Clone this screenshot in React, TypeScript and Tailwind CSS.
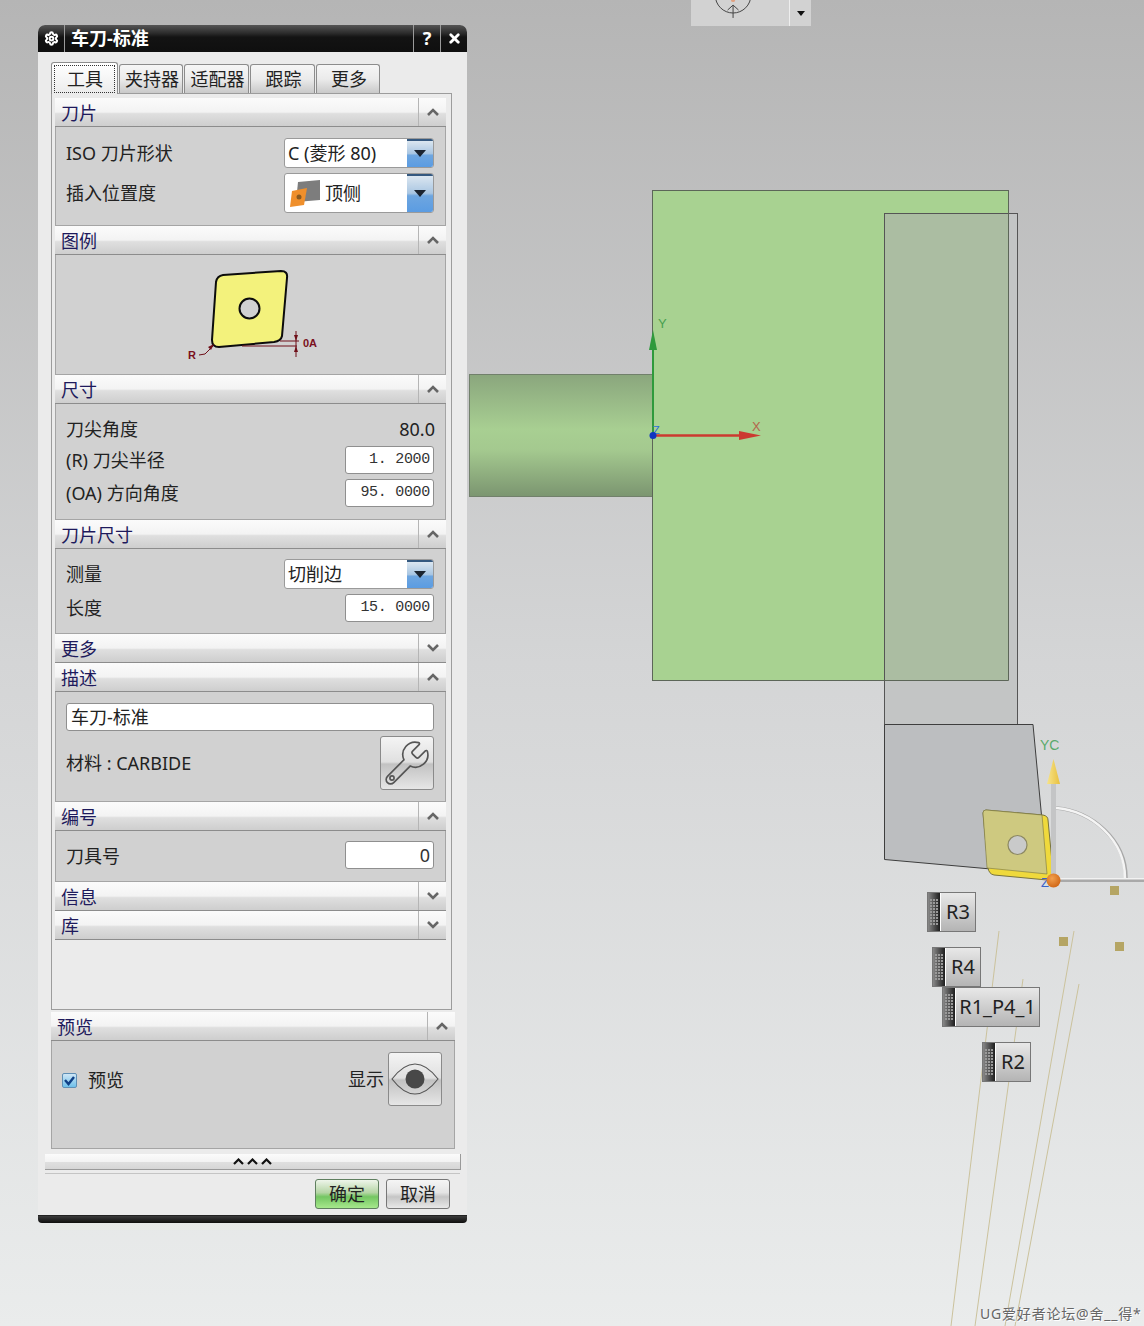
import React from "react";
import { Settings, X } from "lucide-react";

const gloss =
  "bg-[linear-gradient(#f4f4f4_0%,#e0e0e0_48%,#c2c2c2_52%,#e6e6e6_100%)]";

const Chevron = ({ open }: { open: boolean }) => (
  <svg width="12" height="8" viewBox="0 0 12 8">
    <polyline
      points={open ? "1,7 6,2 11,7" : "1,1 6,6 11,1"}
      fill="none"
      stroke="#666"
      strokeWidth="2.6"
    />
  </svg>
);

const SectionHeader = ({ title, open }: { title: string; open: boolean }) => (
  <div className="flex h-[29px] items-stretch border-b border-[#8c8c8c] bg-[linear-gradient(#fbfbfb_0%,#f3f3f3_50%,#dfdfdf_56%,#cecece_100%)]">
    <div className="flex-1 pl-[6px] text-[18px] leading-[30px] text-[#1e1a5c]">
      {title}
    </div>
    <div className="flex w-[28px] items-center justify-center border-l border-[#b5b5b5]">
      <Chevron open={open} />
    </div>
  </div>
);

const SectionBody = ({
  className,
  children,
}: {
  className: string;
  children?: React.ReactNode;
}) => (
  <div
    className={`border-x border-b border-[#a5a5a5] bg-[#d1d1d1] ${className}`}
  >
    {children}
  </div>
);

const Field = ({ value, className }: { value: string; className?: string }) => (
  <div
    className={`flex h-[28px] w-[89px] items-center justify-end rounded-[3px] border border-[#8f8f8f] bg-white pt-[1px] pr-[3px] text-[#333] ${className ?? "[font-family:'Liberation_Mono',monospace] text-[15px] tracking-[-0.3px]"}`}
  >
    {value}
  </div>
);

const Combo = ({
  className,
  children,
}: {
  className: string;
  children: React.ReactNode;
}) => (
  <div
    className={`flex w-[150px] items-stretch overflow-hidden rounded-[3px] border border-[#9a9a9a] bg-white ${className}`}
  >
    <div className="flex flex-1 items-center pl-[3px]">{children}</div>
    <div className="flex w-[26px] items-center justify-center border-t-2 border-[#34587f] bg-[linear-gradient(#dbe6f0_0%,#a9c6e2_48%,#6ea6e0_55%,#5b9ce2_100%)]">
      <svg width="12" height="8" viewBox="0 0 12 8">
        <polygon points="0,0 12,0 6,7" fill="#1b2430" />
      </svg>
    </div>
  </div>
);

const InsertDiagram = () => (
  <svg width="140" height="95" viewBox="185 265 140 95">
    <path
      d="M222 275 L280 271 Q287 271 286 278 L281 336 Q280 341 273 342 L218 347 Q211 347 211 340 L215 282 Q216 276 222 275 Z"
      fill="#f3f27c"
      stroke="#0c0c0c"
      strokeWidth="2"
    />
    <circle cx="248.500" cy="308.500" r="10" fill="#d1d1d1" stroke="#0c0c0c" strokeWidth="2" />
    <g stroke="#6e0f18" strokeWidth="1" fill="none">
      <path d="M198 355 L204 354 L212 346" />
      <path d="M241 346 L296 346 M279 341 L298 341 M295 331 L295 357" />
    </g>
    <polygon points="213,344 207,347 210,350" fill="#6e0f18" />
    <polygon points="295,341 293,335 297,335" fill="#6e0f18" />
    <polygon points="295,346 293,352 297,352" fill="#6e0f18" />
    <text x="187" y="359" fontSize="11" fontWeight="700" fill="#7a1020" fontFamily="'Liberation Sans', sans-serif">R</text>
    <text x="302" y="347" fontSize="11" fontWeight="700" fill="#7a1020" fontFamily="'Liberation Sans', sans-serif">0A</text>
  </svg>
);

const ToolTabs = () => {
  const tabs = [
    { label: "夹持器", w: "w-[64px]" },
    { label: "适配器", w: "w-[65px]" },
    { label: "跟踪", w: "w-[65px]" },
    { label: "更多", w: "w-[64px]" },
  ];
  return (
    <div className="flex h-[31px] items-end gap-px">
      <div className="relative z-10 -mb-px flex h-[32px] w-[67px] items-center justify-center rounded-t-[3px] border border-b-0 border-[#8c8c8c] bg-[linear-gradient(#ffffff_0%,#f4f4f4_60%,#ebebeb_100%)] text-[18px] text-[#222]">
        <div className="flex h-[28px] w-[61px] items-center justify-center border border-dotted border-[#333] pt-px pl-px">
          工具
        </div>
      </div>
      {tabs.map((tab) => (
        <div
          key={tab.label}
          className={`flex h-[29px] items-center justify-center rounded-t-[3px] border border-b-0 border-[#8c8c8c] bg-[linear-gradient(#f6f6f6_0%,#ebebeb_50%,#c9c9c9_100%)] pt-px pl-[2px] text-[18px] text-[#222] ${tab.w}`}
        >
          {tab.label}
        </div>
      ))}
    </div>
  );
};

const Dialog = () => (
  <div className="flex h-[1198px] w-[429px] shrink-0 flex-col overflow-hidden rounded-t-[7px] rounded-b-[4px] bg-[#ebebeb] text-[18px] text-[#222]">
    <div className="flex h-[27px] items-stretch bg-[linear-gradient(#555_0%,#2c2c2c_30%,#131313_45%,#0f0f0f_100%)] text-white">
      <div className="flex w-[27px] items-center justify-center border-r border-[#9a9a9a]">
        <Settings size={15} strokeWidth={3.2} />
      </div>
      <div className="flex-1 pl-[6px] text-[18px] leading-[26px] font-bold">
        车刀-标准
      </div>
      <div className="flex w-[27px] items-center justify-center border-l border-[#9a9a9a] text-[18px] font-bold">
        ?
      </div>
      <div className="flex w-[27px] items-center justify-center border-l border-[#9a9a9a]">
        <X size={15} strokeWidth={4.5} />
      </div>
    </div>

    <div className="flex flex-1 flex-col pt-[10px]">
      <div className="pl-[13px]">
        <ToolTabs />
        <div className="h-[917px] w-[401px] border border-[#9c9c9c] pt-[4px] pl-[3px]">
          <div className="w-[391px]">
            <SectionHeader title="刀片" open />
            <SectionBody className="flex h-[99px] flex-col gap-[5px] pt-[11px] pr-[11px] pl-[10px]">
              <div className="flex items-center justify-between">
                <span>ISO 刀片形状</span>
                <Combo className="h-[30px]">C (菱形 80)</Combo>
              </div>
              <div className="flex items-center justify-between">
                <span>插入位置度</span>
                <Combo className="h-[40px]">
                  <svg width="32" height="30" viewBox="0 0 32 30" className="mr-[4px] ml-[1px]">
                    <polygon points="9,4 31,2 31,22 7,24" fill="#7d7d7d" />
                    <polygon points="3,13 18,10 15,27 1,29" fill="#ef8f2c" />
                    <circle cx="10" cy="19" r="2.500" fill="#8a5a20" />
                  </svg>
                  顶侧
                </Combo>
              </div>
            </SectionBody>

            <SectionHeader title="图例" open />
            <SectionBody className="flex h-[120px] justify-center pt-[10px] pl-[10px]">
              <InsertDiagram />
            </SectionBody>

            <SectionHeader title="尺寸" open />
            <SectionBody className="flex h-[116px] flex-col pt-[8px] pr-[11px] pl-[10px]">
              <div className="flex h-[34px] items-center justify-between">
                <span>刀尖角度</span>
                <span className="-mr-px">80.0</span>
              </div>
              <div className="flex items-center justify-between">
                <span>(R) 刀尖半径</span>
                <Field value="1. 2000" />
              </div>
              <div className="mt-[5px] flex items-center justify-between">
                <span>(OA) 方向角度</span>
                <Field value="95. 0000" />
              </div>
            </SectionBody>

            <SectionHeader title="刀片尺寸" open />
            <SectionBody className="flex h-[85px] flex-col gap-[5px] pt-[10px] pr-[11px] pl-[10px]">
              <div className="flex items-center justify-between">
                <span>测量</span>
                <Combo className="h-[30px]">切削边</Combo>
              </div>
              <div className="flex items-center justify-between">
                <span>长度</span>
                <Field value="15. 0000" />
              </div>
            </SectionBody>

            <SectionHeader title="更多" open={false} />
            <SectionHeader title="描述" open />
            <SectionBody className="flex h-[110px] flex-col pt-[11px] pr-[11px] pl-[10px]">
              <div className="flex h-[28px] items-center rounded-[3px] border border-[#8f8f8f] bg-white pl-[4px]">
                车刀-标准
              </div>
              <div className="mt-[5px] flex items-center justify-between">
                <span>材料 : CARBIDE</span>
                <div className={`flex h-[54px] w-[54px] items-center justify-center rounded-[3px] border border-[#8a8a8a] ${gloss}`}>
                  <svg width="50" height="50" viewBox="0 0 24 24" fill="none" stroke="#555" strokeWidth="0.8">
                    <path d="M14.7 6.3a1 1 0 0 0 0 1.4l1.6 1.6a1 1 0 0 0 1.4 0l3.106-3.105c.32-.322.863-.22.983.218a6 6 0 0 1-8.259 7.057l-7.91 7.91a1 1 0 0 1-2.999-3l7.91-7.91a6 6 0 0 1 7.057-8.259c.438.12.54.662.219.984z" />
                    <circle cx="4.800" cy="19.200" r="1" />
                  </svg>
                </div>
              </div>
            </SectionBody>

            <SectionHeader title="编号" open />
            <SectionBody className="flex h-[51px] items-center justify-between pr-[11px] pl-[10px]">
              <span>刀具号</span>
              <Field value="0" className="-mt-[2px] text-[18px]" />
            </SectionBody>

            <SectionHeader title="信息" open={false} />
            <SectionHeader title="库" open={false} />
          </div>
        </div>

        <div className="mt-[2px] w-[404px]">
          <SectionHeader title="预览" open />
          <SectionBody className="flex h-[108px] items-start justify-between pt-[11px] pr-[12px] pl-[10px]">
            <div className="mt-[15px] flex items-center gap-[11px]">
              <div className="flex h-[15px] w-[15px] items-center justify-center rounded-[2px] border border-[#5f8fb5] bg-[linear-gradient(#cfe6f5,#6fc0ea)]">
                <svg width="13" height="13" viewBox="0 0 13 13">
                  <polyline points="2,6 5.500,10 11,3" fill="none" stroke="#0f3f86" strokeWidth="2.4" />
                </svg>
              </div>
              <span>预览</span>
            </div>
            <div className="flex items-center gap-[4px]">
              <span>显示</span>
              <div className={`flex h-[54px] w-[54px] items-center justify-center rounded-[3px] border border-[#8a8a8a] ${gloss}`}>
                <svg width="48" height="32" viewBox="0 0 48 32">
                  <path d="M1 16 Q24 -14 47 16 Q24 46 1 16 Z" fill="none" stroke="#555" strokeWidth="1.2" />
                  <circle cx="24" cy="16" r="9.500" fill="#484848" />
                </svg>
              </div>
            </div>
          </SectionBody>
        </div>
      </div>

      <div className="mt-[5px] ml-[7px] flex h-[16px] w-[416px] items-center justify-center gap-[3px] border-r border-b border-[#9a9a9a] bg-[linear-gradient(#fbfbfb_0%,#f3f3f3_50%,#dfdfdf_56%,#d6d6d6_100%)]">
        {[0, 1, 2].map((i) => (
          <svg key={i} width="11" height="7" viewBox="0 0 11 7">
            <polyline points="1,6 5.500,1.500 10,6" fill="none" stroke="#111" strokeWidth="2.2" />
          </svg>
        ))}
      </div>
      <div className="mt-[3px] ml-[7px] h-px w-[415px] bg-[#c4c4c4]" />

      <div className="mt-[5px] flex justify-end gap-[7px] pr-[17px]">
        <div className="flex h-[30px] w-[64px] items-center justify-center rounded-[3px] border border-[#5f7f5f] bg-[linear-gradient(#eef5ea_0%,#b5d5a5_45%,#74c662_60%,#a6e88c_100%)]">
          确定
        </div>
        <div className="flex h-[30px] w-[64px] items-center justify-center rounded-[3px] border border-[#777] bg-[linear-gradient(#f5f5f5_0%,#e4e4e4_45%,#c5c5c5_60%,#e8e8e8_100%)]">
          取消
        </div>
      </div>
    </div>

    <div className="h-[8px] border-t border-[#222] bg-[linear-gradient(#3c3c3c,#0e0e0e)]" />
  </div>
);

const Scene = () => (
  <svg width="677" height="1326" viewBox="467 0 677 1326" className="block">
    <defs>
      <linearGradient id="shaft" x1="0" y1="0" x2="0" y2="1">
        <stop offset="0" stopColor="#8aa67d" />
        <stop offset="0.45" stopColor="#a8cf92" />
        <stop offset="0.62" stopColor="#a4c98f" />
        <stop offset="1" stopColor="#7b9570" />
      </linearGradient>
      <linearGradient id="cone" x1="0" y1="0" x2="1" y2="0">
        <stop offset="0" stopColor="#f7e48a" />
        <stop offset="1" stopColor="#e8c03e" />
      </linearGradient>
      <radialGradient id="ball" cx="0.4" cy="0.35" r="0.7">
        <stop offset="0" stopColor="#f2a04e" />
        <stop offset="1" stopColor="#cf6414" />
      </radialGradient>
    </defs>

    {/* turned part */}
    <rect x="469.500" y="374.500" width="183" height="122" fill="url(#shaft)" stroke="#71806b" />
    <rect x="652.500" y="190.500" width="356" height="490" fill="#a8d291" stroke="#5c6658" />

    {/* tool holder */}
    <rect x="884.500" y="213.500" width="133" height="511" fill="#c3c5c5" stroke="#555" />
    <rect x="885" y="214" width="123" height="466" fill="#abbda2" />
    <path d="M1008.500 191 V680.500 H884.500" fill="none" stroke="#5c6658" />
    <polygon points="884.500,724.500 1033,724.500 1047,874 884.500,859.500" fill="#bcbec0" stroke="#3e3e3e" />

    {/* insert */}
    <path d="M986 810 L1043 815 Q1048 816 1048 820 L1053 872 Q1053 880 1047 880 L994 875 Q989 874 988 868 L983 813 Q983 810 986 810 Z" fill="#efd93c" stroke="#77733f" />
    <path d="M986 810 L1042 815 L1047 874 L987 868 L983 813 Q983 810 986 810 Z" fill="#cec980" stroke="#77733f" strokeWidth="0.600" />
    <circle cx="1017.500" cy="845" r="9.500" fill="#c9caca" stroke="#8c8862" strokeWidth="1.200" />

    {/* work handle */}
    <path d="M1056 808 C1092 811 1126 840 1126 878" fill="none" stroke="#a8a8a8" strokeWidth="3.500" />
    <path d="M1056 808 C1092 811 1125 840 1125 878" fill="none" stroke="#f4f4f4" strokeWidth="2.500" />
    <rect x="1051" y="784" width="5" height="96" fill="#c4c5c6" />
    <polygon points="1053.500,759 1060,784 1047,784" fill="url(#cone)" />
    <rect x="1053" y="878" width="91" height="4" fill="#a9a9a9" />
    <rect x="1053" y="878" width="91" height="1.500" fill="#f2f2f2" />
    <text x="1040" y="750" fontSize="14" fill="#5aaa6c" fontFamily="'Liberation Sans', sans-serif">YC</text>
    <text x="1041" y="887" fontSize="13" fill="#3a62c8" fontFamily="'Liberation Sans', sans-serif">Z</text>
    <circle cx="1053.500" cy="880.500" r="7" fill="url(#ball)" />

    {/* points */}
    <rect x="1110" y="886" width="9" height="9" fill="#b5a564" />
    <rect x="1059" y="937" width="9" height="9" fill="#b5a564" />
    <rect x="1115" y="942" width="9" height="9" fill="#b5a564" />
    <g stroke="#cbc29c" strokeWidth="1">
      <line x1="999" y1="931" x2="951" y2="1326" />
      <line x1="1023" y1="979" x2="975" y2="1326" />
      <line x1="1074" y1="931" x2="1005" y2="1326" />
      <line x1="1079" y1="984" x2="1015" y2="1326" />
    </g>

    {/* axes */}
    <line x1="653" y1="345" x2="653" y2="435" stroke="#2f9a3c" strokeWidth="2" />
    <polygon points="653,330 657,350 649,350" fill="#2f9a3c" />
    <text x="658" y="328" fontSize="13" fill="#47a050" fontFamily="'Liberation Sans', sans-serif">Y</text>
    <line x1="653" y1="435.500" x2="745" y2="435.500" stroke="#cc3a30" strokeWidth="2.500" />
    <polygon points="761,435.500 739,431 739,440" fill="#cc3a30" />
    <text x="752" y="431" fontSize="13" fill="#b5654c" fontFamily="'Liberation Sans', sans-serif">X</text>
    <text x="653" y="434" fontSize="11" fill="#2a6fd8" fontFamily="'Liberation Sans', sans-serif">Z</text>
    <circle cx="653" cy="435.500" r="3.500" fill="#0f35c0" />
  </svg>
);

const Handle = ({ label, className }: { label: string; className: string }) => (
  <div
    className={`absolute flex h-[40px] items-stretch border border-[#777] bg-[linear-gradient(#e8e8e8,#b4b4b4)] text-[20px] text-[#222] ${className}`}
  >
    <div className="flex w-[13px] flex-wrap content-center justify-center gap-[1px] border-r border-r-white bg-[linear-gradient(90deg,#888,#1d1d1d)] px-[2px]">
      {Array.from({ length: 27 }).map((_, i) => (
        <span key={i} className="h-[2px] w-[2px] bg-[#999]" />
      ))}
    </div>
    <div className="flex flex-1 items-center justify-center">{label}</div>
  </div>
);

export default function App() {
  return (
    <div className="relative flex h-[1326px] w-[1144px] overflow-hidden bg-linear-to-b from-[#b5b5b5] via-[#d4d5d6] to-[#eaecec] pt-[25px] pl-[38px] [font-family:'Noto_Sans','Noto_Sans_CJK_SC',sans-serif]">
      <Dialog />

      <div className="absolute top-0 left-[467px]">
        <Scene />
      </div>

      {/* view toolbar cut off by the top of the window */}
      <div className="absolute top-0 left-[691px] flex h-[26px] w-[120px] overflow-hidden bg-[#d2d2d2]">
        <svg width="99" height="26" viewBox="691 0 99 26" className="border-r border-[#eee]">
          <circle cx="733.500" cy="-5" r="18" fill="none" stroke="#444" strokeWidth="1" />
          <path d="M733.500 18 V5 M728 10 L733.500 5 L739 10" fill="none" stroke="#444" strokeWidth="1" />
          <circle cx="733.500" cy="0" r="2" fill="#e0a080" />
        </svg>
        <div className="flex flex-1 items-center justify-center pt-[1px]">
          <svg width="8" height="5" viewBox="0 0 8 5">
            <polygon points="0,0 8,0 4,5" fill="#111" />
          </svg>
        </div>
      </div>

      <Handle label="R3" className="top-[892px] left-[927px] w-[49px]" />
      <Handle label="R4" className="top-[947px] left-[932px] w-[49px]" />
      <Handle label="R1_P4_1" className="top-[987px] left-[942px] w-[98px]" />
      <Handle label="R2" className="top-[1042px] left-[982px] w-[49px]" />

      <div className="absolute top-[1304px] left-[980px] text-[14px] leading-[20px] tracking-[0.8px] whitespace-nowrap text-[#666] [text-shadow:1px_1px_0_#fff]">
        UG爱好者论坛@舍__得*
      </div>
    </div>
  );
}
